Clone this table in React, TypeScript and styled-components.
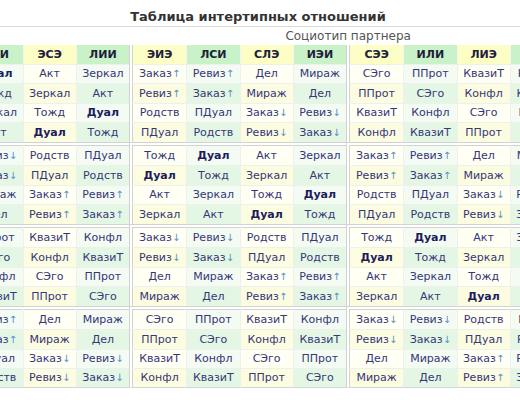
import React from 'react';
import styled, { createGlobalStyle } from 'styled-components';

const GlobalStyle = createGlobalStyle`
  html, body { margin: 0; padding: 0; background: #fff; }
  body { font-family: "DejaVu Sans", Verdana, sans-serif; overflow: hidden; }
`;

type Tone = 'y' | 'g';

const TYPES = [
  'ИЛЭ', 'СЭИ', 'ЭСЭ', 'ЛИИ',
  'ЭИЭ', 'ЛСИ', 'СЛЭ', 'ИЭИ',
  'СЭЭ', 'ИЛИ', 'ЛИЭ', 'ЭСИ',
  'ЛСЭ', 'ЭИИ', 'ИЭЭ', 'СЛИ',
];

// blocks by quadra distance: same, next, opposite, previous
const BLOCKS: string[][][] = [
  [['Тожд', 'Дуал', 'Акт', 'Зеркал'], ['Дуал', 'Тожд', 'Зеркал', 'Акт'], ['Акт', 'Зеркал', 'Тожд', 'Дуал'], ['Зеркал', 'Акт', 'Дуал', 'Тожд']],
  [['Заказ↑', 'Ревиз↑', 'Дел', 'Мираж'], ['Ревиз↑', 'Заказ↑', 'Мираж', 'Дел'], ['Родств', 'ПДуал', 'Заказ↓', 'Ревиз↓'], ['ПДуал', 'Родств', 'Ревиз↓', 'Заказ↓']],
  [['СЭго', 'ППрот', 'КвазиТ', 'Конфл'], ['ППрот', 'СЭго', 'Конфл', 'КвазиТ'], ['КвазиТ', 'Конфл', 'СЭго', 'ППрот'], ['Конфл', 'КвазиТ', 'ППрот', 'СЭго']],
  [['Заказ↓', 'Ревиз↓', 'Родств', 'ПДуал'], ['Ревиз↓', 'Заказ↓', 'ПДуал', 'Родств'], ['Дел', 'Мираж', 'Заказ↑', 'Ревиз↑'], ['Мираж', 'Дел', 'Ревиз↑', 'Заказ↑']],
];

const relation = (r: number, c: number) =>
  BLOCKS[(Math.floor(c / 4) - Math.floor(r / 4) + 4) % 4][r % 4][c % 4];

const toneOf = (i: number): Tone => (i % 2 === 0 ? 'y' : 'g');

const HEAD_BG = { y: '#fdfdc6', g: '#c9f2c9' };
const BODY_BG = {
  y: ['#fffff3', '#fcfce0'],
  g: ['#f3fbf3', '#e4f6e4'],
};

const SEPARATOR = '4px double #d2d2d2';
const HAIRLINE = '1px solid #eef0ee';

const Viewport = styled.div`
  width: 520px;
  height: 400px;
  overflow: hidden;
`;

// the visible window is a crop of a wider sheet
const Sheet = styled.div`
  width: 1044px;
  margin-left: -264px;
  padding-top: 8px;
`;

const Title = styled.h3`
  margin: 0;
  height: 18px;
  line-height: 18px;
  font-size: 13px;
  font-weight: bold;
  color: #333;
  text-align: center;
  border-bottom: 1px solid #dadada;
`;

const Grid = styled.table`
  width: 1044px;
  table-layout: fixed;
  border-collapse: separate;
  border-spacing: 0;
`;

const Col = styled.col<{ $w: number }>`
  width: ${(p) => p.$w}px;
`;

const PartnerRow = styled.tr`
  height: 18px;
`;

const PartnerLabel = styled.th`
  padding: 0;
  font-size: 12px;
  font-weight: normal;
  color: #555;
  text-align: center;
  vertical-align: middle;
`;

const Corner = styled.th`
  padding: 0;
`;

const HeadRow = styled.tr`
  height: 18.5px;
`;

const TypeHead = styled.th<{ $tone: Tone; $blockStart: boolean }>`
  box-sizing: border-box;
  padding: 0;
  background: ${(p) => HEAD_BG[p.$tone]};
  background-clip: padding-box;
  border-left: ${(p) => (p.$blockStart ? SEPARATOR : '1px solid #f4f4f4')};
  font-size: 11px;
  font-weight: bold;
  color: #20203a;
  text-align: center;
  vertical-align: middle;
  white-space: nowrap;
  overflow: hidden;
`;

const BodyRow = styled.tr<{ $groupStart: boolean }>`
  height: ${(p) => (p.$groupStart ? 23.5 : 19.5)}px;
`;

const RowHead = styled.th<{ $tone: Tone; $groupStart: boolean; $last: boolean }>`
  box-sizing: border-box;
  padding: 0 8px;
  background: ${(p) => HEAD_BG[p.$tone]};
  background-clip: padding-box;
  border-top: ${(p) => (p.$groupStart ? SEPARATOR : '1px solid #f4f4f4')};
  border-bottom: ${(p) => (p.$last ? '1px solid #d4d4d4' : '0')};
  font-size: 11px;
  font-weight: bold;
  color: #20203a;
  text-align: right;
  white-space: nowrap;
`;

const Cell = styled.td<{
  $tone: Tone;
  $even: boolean;
  $blockStart: boolean;
  $groupStart: boolean;
  $last: boolean;
}>`
  box-sizing: border-box;
  padding: 0;
  background: ${(p) => BODY_BG[p.$tone][p.$even ? 1 : 0]};
  background-clip: padding-box;
  border-left: ${(p) => (p.$blockStart ? SEPARATOR : HAIRLINE)};
  border-top: ${(p) => (p.$groupStart ? SEPARATOR : HAIRLINE)};
  border-bottom: ${(p) => (p.$last ? '1px solid #d4d4d4' : '0')};
  font-size: 11px;
  color: #36367a;
  text-align: center;
  vertical-align: middle;
  white-space: nowrap;
  overflow: hidden;
`;

const Strong = styled.b`
  color: #1c1c5c;
`;

const Arrow = styled.span`
  font-size: 10px;
  color: #5a8fc4;
`;

const Relation = ({ name }: { name: string }) => {
  if (name === 'Дуал') return <Strong>{name}</Strong>;
  const tail = name.slice(-1);
  if (tail === '↑' || tail === '↓') {
    return (
      <>
        {name.slice(0, -1)}
        <Arrow>{tail}</Arrow>
      </>
    );
  }
  return <>{name}</>;
};

const colWidth = (i: number) => (i % 4 === 0 && i > 0 ? 57.25 : 53.25);

export default function App() {
  return (
    <Viewport>
      <GlobalStyle />
      <Sheet>
        <Title>Таблица интертипных отношений</Title>
        <Grid>
          <colgroup>
            <Col $w={180} />
            {TYPES.map((t, i) => (
              <Col key={t} $w={colWidth(i)} />
            ))}
          </colgroup>
          <thead>
            <PartnerRow>
              <Corner />
              <PartnerLabel colSpan={16}>Социотип партнера</PartnerLabel>
            </PartnerRow>
            <HeadRow>
              <Corner />
              {TYPES.map((t, i) => (
                <TypeHead key={t} $tone={toneOf(i)} $blockStart={i % 4 === 0 && i > 0}>
                  {t}
                </TypeHead>
              ))}
            </HeadRow>
          </thead>
          <tbody>
            {TYPES.map((rowType, r) => {
              const groupStart = r % 4 === 0 && r > 0;
              const last = r === TYPES.length - 1;
              return (
                <BodyRow key={rowType} $groupStart={groupStart}>
                  <RowHead $tone={toneOf(r)} $groupStart={groupStart} $last={last}>
                    {rowType}
                  </RowHead>
                  {TYPES.map((colType, c) => (
                    <Cell
                      key={colType}
                      $tone={toneOf(c)}
                      $even={r % 2 === 1}
                      $blockStart={c % 4 === 0 && c > 0}
                      $groupStart={groupStart}
                      $last={last}
                    >
                      <Relation name={relation(r, c)} />
                    </Cell>
                  ))}
                </BodyRow>
              );
            })}
          </tbody>
        </Grid>
      </Sheet>
    </Viewport>
  );
}
